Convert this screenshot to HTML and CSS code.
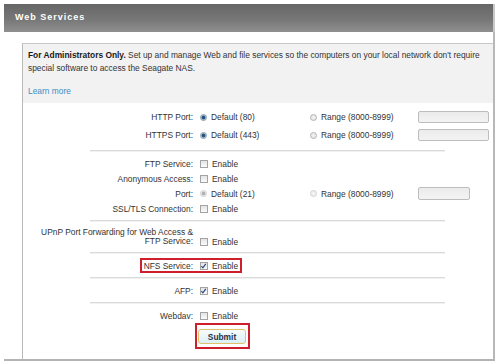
FILE: index.html
```html
<!DOCTYPE html>
<html lang="en">
<head>
    <meta charset="UTF-8">
    <meta name="viewport" content="width=device-width, initial-scale=1.0">
    <title>Web Services</title>
    <link rel="stylesheet" href="styles.css">
</head>
<body>
    <div class="window">
        <div class="header">Web Services</div>
        <div class="panel">
            <div class="box">
                <div class="intro">
                    <p class="intro-text"><b>For Administrators Only.</b> Set up and manage Web and file services so the computers on your local network don't require<br>special software to access the Seagate NAS.</p>
                    <a href="#" class="learn">Learn more</a>
                </div>

                <div class="section first">
                    <div class="row tall">
                        <div class="label">HTTP Port:</div>
                        <div class="opt"><span class="radio on"></span>Default (80)</div>
                        <div class="opt"><span class="radio"></span>Range (8000-8999)</div>
                        <span class="field"></span>
                    </div>
                    <div class="row tall">
                        <div class="label">HTTPS Port:</div>
                        <div class="opt"><span class="radio on"></span>Default (443)</div>
                        <div class="opt"><span class="radio"></span>Range (8000-8999)</div>
                        <span class="field"></span>
                    </div>
                </div>
                <div class="sep"></div>

                <div class="section">
                    <div class="row">
                        <div class="label">FTP Service:</div>
                        <div class="opt"><span class="check"></span>Enable</div>
                    </div>
                    <div class="row">
                        <div class="label">Anonymous Access:</div>
                        <div class="opt"><span class="check"></span>Enable</div>
                    </div>
                    <div class="row">
                        <div class="label">Port:</div>
                        <div class="opt"><span class="radio dim on"></span>Default (21)</div>
                        <div class="opt"><span class="radio dim"></span>Range (8000-8999)</div>
                        <span class="field short"></span>
                    </div>
                    <div class="row">
                        <div class="label">SSL/TLS Connection:</div>
                        <div class="opt"><span class="check"></span>Enable</div>
                    </div>
                </div>
                <div class="sep"></div>

                <div class="section upnp">
                    <div class="row two-line">
                        <div class="label">UPnP Port Forwarding for Web Access &amp;<br>FTP Service:</div>
                        <div class="opt"><span class="check"></span>Enable</div>
                    </div>
                </div>
                <div class="sep"></div>

                <div class="section">
                    <div class="row marked">
                        <div class="label">NFS Service:</div>
                        <div class="opt"><span class="check on"><svg viewBox="0 0 8 8" width="8" height="8"><path d="M1.6 4.2 L3.3 6.1 L6.6 1.6" fill="none" stroke="#24457e" stroke-width="1.3"/></svg></span>Enable</div>
                    </div>
                </div>
                <div class="sep"></div>

                <div class="section">
                    <div class="row">
                        <div class="label">AFP:</div>
                        <div class="opt"><span class="check on"><svg viewBox="0 0 8 8" width="8" height="8"><path d="M1.6 4.2 L3.3 6.1 L6.6 1.6" fill="none" stroke="#24457e" stroke-width="1.3"/></svg></span>Enable</div>
                    </div>
                </div>
                <div class="sep"></div>

                <div class="section last">
                    <div class="row">
                        <div class="label">Webdav:</div>
                        <div class="opt"><span class="check"></span>Enable</div>
                    </div>
                    <div class="submit-wrap">
                        <button class="submit">Submit</button>
                    </div>
                </div>
            </div>
        </div>
    </div>
</body>
</html>
```

FILE: styles.css
```css
body {
    margin: 0;
    background-color: white;
    font-family: "Liberation Sans", Arial, Helvetica, sans-serif;
    font-size: 8.4px;
    color: #333;
}
.window {
    width: 491px;
    margin: 4px 0 0 4px;
}
.header {
    width: 489px;
    height: 28px;
    line-height: 26px;
    padding-left: 11px;
    box-sizing: border-box;
    background: linear-gradient(to bottom, #666 0%, #777 55%, #8f8f8f 100%);
    box-shadow: 2px 0 0 #c9c9c9;
    color: white;
    font-size: 9px;
    font-weight: bold;
    letter-spacing: 1px;
}
.panel {
    padding: 11px 0 0 18px;
    border-right: 2px solid #b8b8b8;
    border-bottom: 2px solid #b3b3b3;
}
.box {
    border-left: 1px solid #b9b9b9;
    border-top: 1px solid #c8c8c8;
}
.intro {
    background-color: #f2f2f2;
    padding: 5px;
    height: 59px;
    box-sizing: border-box;
}
.intro-text {
    margin: 0;
    line-height: 13px;
    white-space: nowrap;
}
.intro-text b {
    color: #1a1a1a;
}
.learn {
    display: block;
    margin-top: 10px;
    line-height: 13px;
    color: #3a8fc6;
    text-decoration: none;
}
.section {
    padding: 5px 0 4px 0;
}
.section.first {
    padding-bottom: 6px;
}
.section.upnp {
    padding: 7px 0 6px 0;
}
.section.last {
    padding-bottom: 10px;
}
.sep {
    margin-left: 67px;
    width: 355px;
    height: 1px;
    background-color: #dadada;
    box-shadow: 0 1px 0 #f1f1f1;
}
.row {
    display: flex;
    align-items: center;
    height: 15px;
}
.row.tall {
    height: 18px;
}
.row.two-line {
    height: auto;
    align-items: flex-end;
}
.row.two-line .label {
    line-height: 9px;
}
.row.two-line .opt {
    height: 9px;
}
.row.marked {
    position: relative;
}
.row.marked::after {
    content: "";
    position: absolute;
    left: 117px;
    top: 0;
    width: 102px;
    height: 15px;
    border: 2px solid #cf1f2c;
    box-sizing: border-box;
}
.label {
    width: 170px;
    text-align: right;
    white-space: nowrap;
    margin-right: 7px;
}
.opt {
    display: flex;
    align-items: center;
    width: 110px;
    white-space: nowrap;
}
.opt + .opt {
    width: 108px;
}
.radio {
    width: 7px;
    height: 7px;
    margin-right: 4px;
    border-radius: 50%;
    border: 1px solid #b4b4b4;
    box-sizing: border-box;
    background: radial-gradient(circle, #f4f4f4 0, #dedede 100%);
}
.radio.on {
    border-color: #8a9aaa;
    background: radial-gradient(circle, #1b4a78 0, #2a5d8e 1.6px, #cfdbe6 2.4px, #eef2f5 100%);
}
.radio.dim {
    border-color: #d2d2d2;
    background: radial-gradient(circle, #f7f7f7 0, #e6e6e6 100%);
}
.radio.dim.on {
    background: radial-gradient(circle, #a9a9a9 0, #b5b5b5 1.4px, #e6e6e6 2.2px, #f3f3f3 100%);
}
.check {
    display: flex;
    width: 8px;
    height: 8px;
    margin-right: 4px;
    border: 1px solid #a3a3a3;
    box-sizing: border-box;
    background: linear-gradient(to bottom, #e4e4e4, #fbfbfb);
}
.check svg {
    margin: -1px 0 0 -1px;
}
.field {
    width: 71px;
    height: 12px;
    border: 1px solid #bdbdbd;
    border-radius: 2px;
    box-sizing: border-box;
    background: linear-gradient(to bottom, #ebebeb, #f3f3f3);
}
.field.short {
    width: 52px;
    height: 13px;
}
.submit-wrap {
    display: inline-block;
    margin-left: 172px;
    padding: 4px 2px 3px 1px;
    border: 2px solid #cf1f2c;
}
.submit {
    display: block;
    width: 48px;
    height: 15px;
    padding: 0;
    border: 1px solid #dfc16a;
    border-radius: 3px;
    background: linear-gradient(to bottom, #f6fcfd, #dcf0f4);
    font-family: "Liberation Sans", Arial, Helvetica, sans-serif;
    font-size: 8.4px;
    font-weight: bold;
    color: #27324a;
    cursor: pointer;
}
```
